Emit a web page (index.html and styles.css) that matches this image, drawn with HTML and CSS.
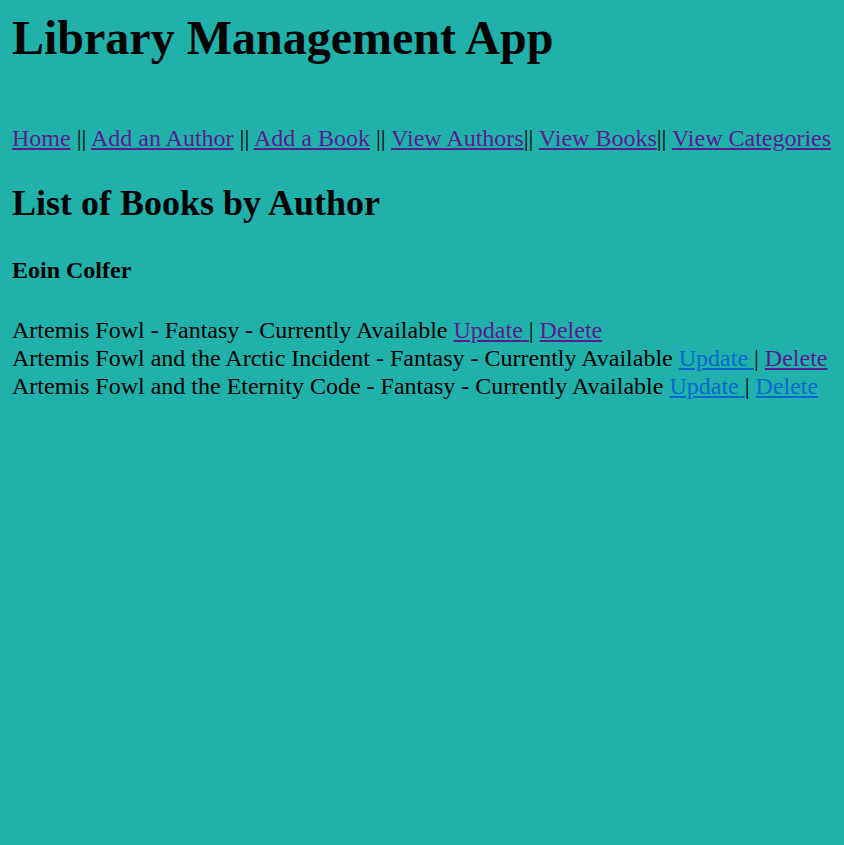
FILE: index.html
```html
<!DOCTYPE html>
<html>
<head>
<meta charset="utf-8">
<title>Library Management App</title>
<link rel="stylesheet" href="styles.css">
</head>
<body>
<h1 class="title">Library Management App</h1>
<p class="nav"><a class="visited" href="#">Home</a> || <a class="visited" href="#">Add an Author</a> || <a class="visited" href="#">Add a Book</a> || <a class="visited" href="#">View Authors</a>|| <a class="visited" href="#">View Books</a>|| <a class="visited" href="#">View Categories</a></p>
<h2 class="heading">List of Books by Author</h2>
<h4 class="author">Eoin Colfer</h4>
<div class="books">
<div class="book">Artemis Fowl - Fantasy - Currently Available <a class="visited" href="#">Update </a> | <a class="visited" href="#">Delete</a></div>
<div class="book">Artemis Fowl and the Arctic Incident - Fantasy - Currently Available <a class="link" href="#">Update </a> | <a class="visited" href="#">Delete</a></div>
<div class="book">Artemis Fowl and the Eternity Code - Fantasy - Currently Available <a class="link" href="#">Update </a> | <a class="link" href="#">Delete</a></div>
</div>
</body>
</html>
```
FILE: styles.css
```css
html {
  background: #20b1aa;
}
body {
  margin: 0;
  padding: 10px 12px;
  font-family: "Liberation Serif", "Times New Roman", serif;
  font-size: 24px;
  color: #000;
  background: #20b1aa;
}
.title {
  font-size: 48px;
  margin: 0 0 60px;
  white-space: nowrap;
}
.nav {
  margin: 0;
  white-space: nowrap;
}
.heading {
  font-size: 36px;
  margin: 30px 0 32px;
}
.author {
  font-size: 24px;
  margin: 33px 0 32px;
}
.books {
  white-space: nowrap;
  line-height: 28px;
}
a {
  text-decoration: underline;
}
.visited {
  color: #581c92;
}
.link {
  color: #0a67cf;
}
```
